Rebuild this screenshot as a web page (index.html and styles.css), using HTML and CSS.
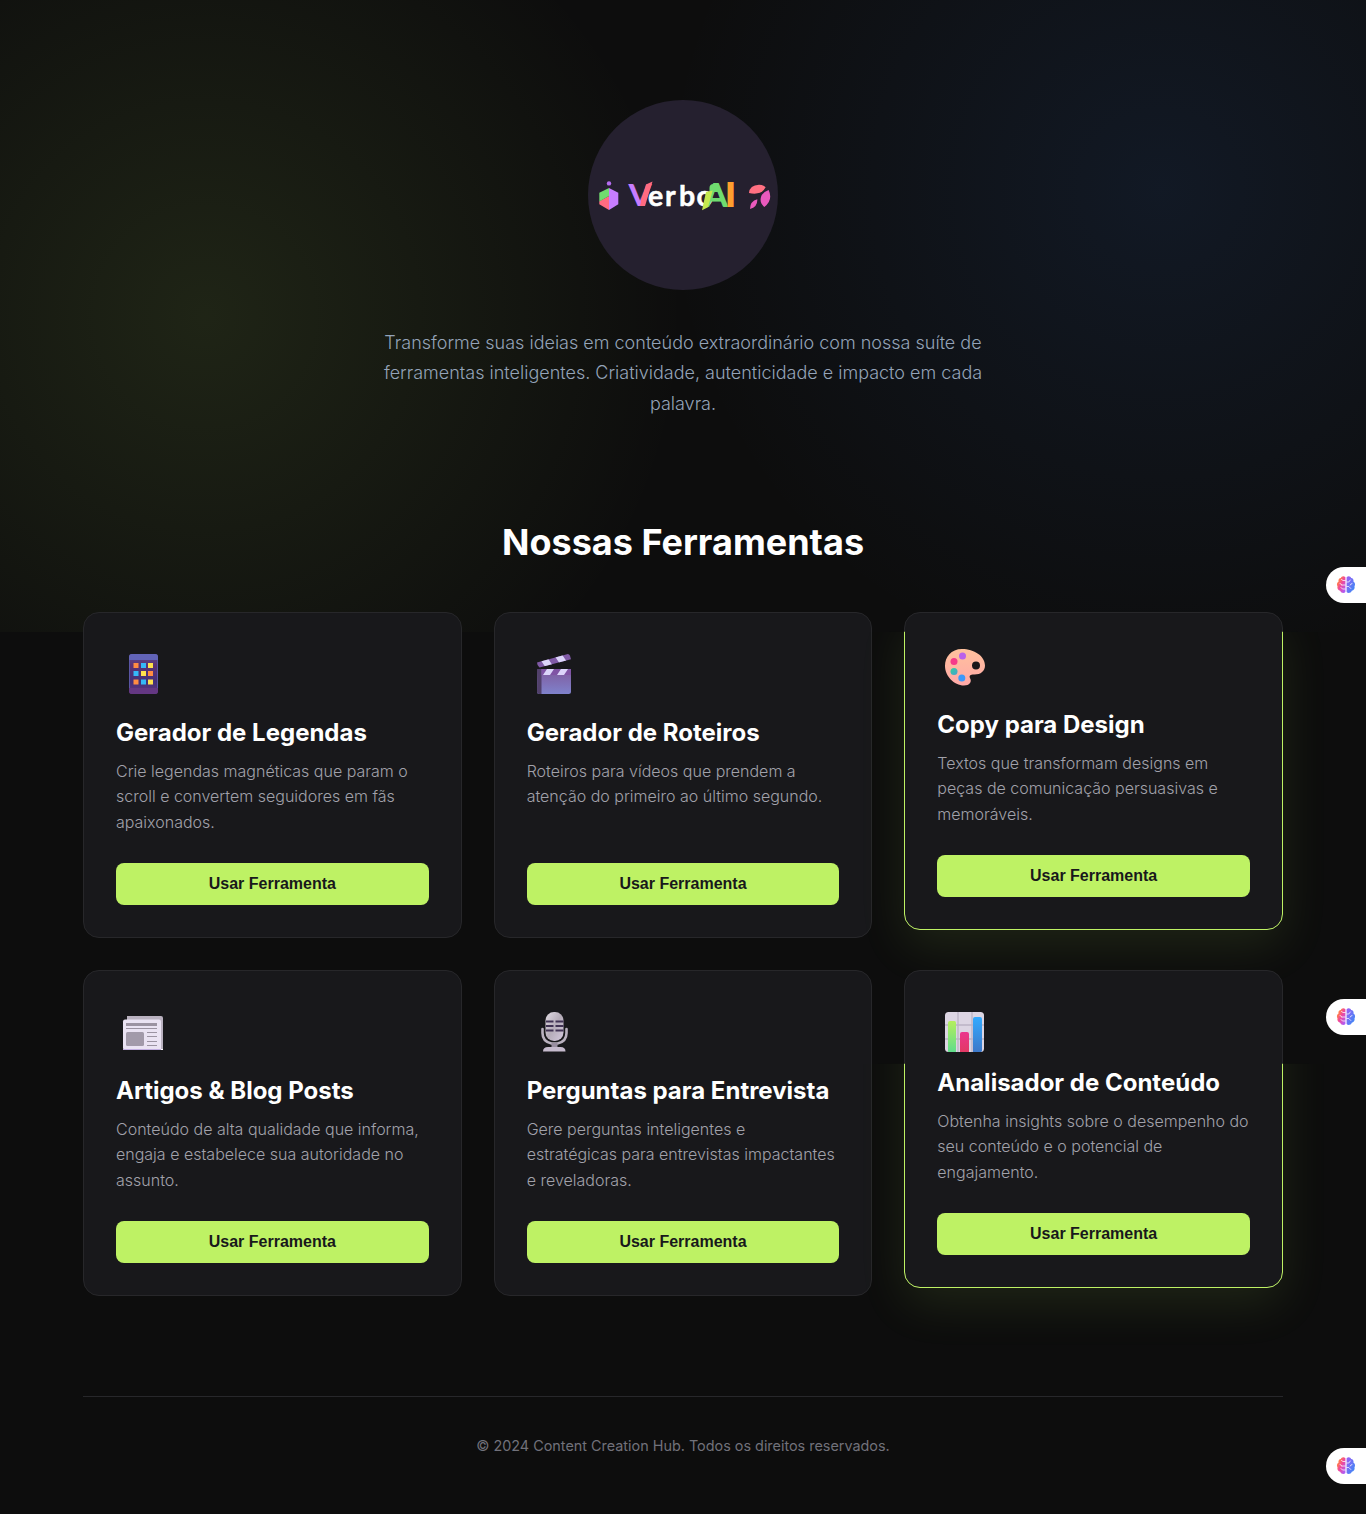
FILE: index.html
```html
<!DOCTYPE html>
<html lang="pt-BR">
<head>
<meta charset="utf-8">
<title>VerboAI</title>
<link rel="stylesheet" href="styles.css">
</head>
<body>
<svg width="0" height="0" class="defs" aria-hidden="true">
  <defs>
    <linearGradient id="brainFill" x1="0" y1="0" x2="1" y2="1"><stop offset="0" stop-color="#ff8a3c"/><stop offset=".25" stop-color="#ff7a50"/><stop offset=".5" stop-color="#f0489c"/><stop offset=".9" stop-color="#b05cf5"/></linearGradient>
    <linearGradient id="brainRight" x1="0" y1="0" x2="1" y2="1"><stop offset="0" stop-color="#a05cf5"/><stop offset="1" stop-color="#2f8ff5"/></linearGradient>
    <symbol id="brain" viewBox="0 0 20 20">
      <path fill="url(#brainFill)" d="M9.400 2.200C7.600.6 5.300 1.400 4.900 3.100 3 3.200 2 5 2.600 6.500.8 7.500.5 10 1.500 11.200.9 13.500 2.300 15.500 4.200 15.700c.8 2.300 3.800 3 5.200 1.300z"/>
      <path fill="url(#brainRight)" d="M10.600 2.200c1.800-1.600 4.100-.8 4.500.9 1.900.1 2.900 1.900 2.300 3.400 1.800 1 2.100 3.500 1.100 4.700.6 2.300-.8 4.300-2.700 4.500-.8 2.300-3.800 3-5.200 1.300z"/>
      <path fill="none" stroke="#fff" stroke-width=".75" stroke-linecap="round" d="M9.200 5.500H7L5.500 4.500M4 8.500q1.500.2 1.800 1.500M9.200 10H5.800M9.200 14H6.500L5 12.500M10.800 7h2l1.500-2M16 8.500q-1.500.2-1.800 1.500M10.800 11.500h2l2 2"/>
    </symbol>
  </defs>
</svg>

<div class="glow"></div>
<div class="page">
  <header class="hero">
    <svg class="logo" viewBox="0 0 190 190" role="img">
      <defs>
        <linearGradient id="vFill" x1="0" x2="1" y1="0" y2="0"><stop offset=".52" stop-color="#c77dff"/><stop offset=".56" stop-color="#ff6b81"/></linearGradient>
      </defs>
      <circle cx="95" cy="95" r="95" fill="#25202f"/>
      <circle cx="21" cy="83.400" r="2.200" fill="#b56cf0"/>
      <path fill="#c77dff" d="M21 88l9.300 4.700v11.600L21 110z"/>
      <path fill="#ff6b81" d="M21 96v14l-9.700-5.700v-3z"/>
      <path fill="#6fdc6f" d="M21 88v8l-9.700 5.500v-8.800z"/>
      <text class="wordmark heavy" x="40.500" y="106" font-size="30.500" textLength="23" lengthAdjust="spacingAndGlyphs" fill="url(#vFill)">V</text>
      <path fill="#ff6b81" d="M58 84.500l6.500-3-7.500 24.500h-5z"/>
      <text class="wordmark bold" x="60 77 91 108.500" y="106" font-size="28.500" fill="#fff">erbo</text>
      <text class="wordmark heavy" x="116" y="107" font-size="33" textLength="24" lengthAdjust="spacingAndGlyphs" fill="#6fdc6f">A</text>
      <path fill="#6fdc6f" d="M121.500 88q0-4 4-4h4l3 8h-11z"/>
      <path fill="#c5e84e" d="M118 92l6.700-1.400-4.700 16.700-6 3z"/>
      <text class="wordmark heavy" x="136.500" y="107.300" font-size="33.500" textLength="12" lengthAdjust="spacingAndGlyphs" fill="#ff9f2e">I</text>
      <g transform="translate(-8 -5) scale(.3333)">
        <path fill="#ff7082" d="M507 294Q509 270 537 269 550 269 557 277 544 302 507 294z"/>
        <path fill="#ea59bd" d="M566 285Q580 315 553 336 538 324 543 306 548 291 566 285zM532 313Q533 336 510 342 510 319 532 313z"/>
      </g>
    </svg>
    <p class="lead">Transforme suas ideias em conteúdo extraordinário com nossa suíte de ferramentas inteligentes. Criatividade, autenticidade e impacto em cada palavra.</p>
  </header>

  <main>
    <h2 class="section-title">Nossas Ferramentas</h2>
    <div class="grid">
      <article class="card">
        <svg class="icon" viewBox="0 0 56 56">
          <defs><linearGradient id="phone" x1="0" x2="0" y1="0" y2="1"><stop stop-color="#584c91"/><stop offset=".28" stop-color="#5c3273"/><stop offset=".7" stop-color="#423079"/><stop offset="1" stop-color="#66347e"/></linearGradient></defs>
          <rect x="13" y="9" width="29" height="40" rx="3" fill="url(#phone)"/>
          <path d="M16 9h23a3 3 0 0 1 3 3v3H13v-3a3 3 0 0 1 3-3z" fill="#6264b8"/>
          <path d="M13 43h29v3a3 3 0 0 1-3 3H16a3 3 0 0 1-3-3z" fill="#643783"/>
          <path d="M13.500 15v28M41.500 15v28" stroke="#5a55a4"/>
          <path fill="#ff8c42" d="M17.500 18h5v5h-5zM32 26h5v5h-5zM17.500 34.500h5v5h-5z"/>
          <path fill="#35b8f8" d="M25 18h5v5h-5zM17.500 26h5v5h-5zM25 34.500h5v5h-5z"/>
          <path fill="#ffe14d" d="M32 18h5v5h-5zM25 26h5v5h-5zM32 34.500h5v5h-5z"/>
        </svg>
        <h3>Gerador de Legendas</h3>
        <p>Crie legendas magnéticas que param o scroll e convertem seguidores em fãs apaixonados.</p>
        <button>Usar Ferramenta</button>
      </article>

      <article class="card">
        <svg class="icon" viewBox="0 0 56 56">
          <defs>
            <linearGradient id="clap" x1="0" x2="0" y1="0" y2="1"><stop stop-color="#805a9c"/><stop offset="1" stop-color="#7f82cc"/></linearGradient>
            <clipPath id="clapArm"><path d="M10 17.500L40 9.200q2-.5 3 1.500l1 3.500L12.500 22.500q-2.500-2-2.500-5z"/></clipPath>
          </defs>
          <g clip-path="url(#clapArm)"><rect x="8" y="6" width="38" height="18" fill="#805aa6"/><path fill="#dcd5fa" d="M13 14l7-2 6 9-7 2zM27 10l7-2 6 9-7 2z"/></g>
          <path d="M10.500 24H44v22.500a2.500 2.500 0 0 1-2.500 2.500h-29a2.500 2.500 0 0 1-2.500-2.500z" fill="url(#clap)"/>
          <path d="M10.500 24h4v25h-2a2.500 2.500 0 0 1-2.500-2.500z" fill="#51406b"/>
          <path d="M14.500 24H44v6H14.500z" fill="#8054a5"/>
          <path fill="#dcd5fa" d="M20 24h7l-4 6h-7zM34 24h7l-4 6h-7z"/>
        </svg>
        <h3>Gerador de Roteiros</h3>
        <p>Roteiros para vídeos que prendem a atenção do primeiro ao último segundo.</p>
        <button>Usar Ferramenta</button>
      </article>

      <article class="card active">
        <svg class="icon" viewBox="0 0 56 56">
          <defs>
            <linearGradient id="pal" x1="0" x2="0" y1="0" y2="1"><stop stop-color="#ffc19d"/><stop offset="1" stop-color="#ffa9a8"/></linearGradient>
            <linearGradient id="teal" x1="0" x2="1" y1="0" y2="1"><stop stop-color="#30d09a"/><stop offset="1" stop-color="#4a9fd0"/></linearGradient>
          </defs>
          <path fill="url(#pal)" fill-rule="evenodd" d="M25 12C14 12 8 20 8 29c0 10 9 19.500 19 19.500 5.500 0 8-3.500 6.200-7-1.500-3 0-4 3.800-4 6.500.2 11-3.200 11-9C48 19 37 12 25 12zm14 12.500a4 4 0 1 1 0 8 4 4 0 0 1 0-8z"/>
          <circle cx="25.500" cy="19" r="3.500" fill="#ba61eb"/><circle cx="17" cy="24.500" r="3.500" fill="#f53a8a"/><circle cx="17" cy="34.500" r="3.500" fill="url(#teal)"/><circle cx="24.800" cy="41" r="3.500" fill="#3c98fb"/>
        </svg>
        <h3>Copy para Design</h3>
        <p>Textos que transformam designs em peças de comunicação persuasivas e memoráveis.</p>
        <button>Usar Ferramenta</button>
      </article>

      <article class="card">
        <svg class="icon" viewBox="0 -5 56 56">
          <path d="M11 8h34q2 0 2 2v31H11z" fill="#b9b1c0"/>
          <path d="M9 11.500h34q2 0 2 2V42H9a2 2 0 0 1-2-2V13.500a2 2 0 0 1 2-2z" fill="#eae3f3"/>
          <path d="M7 41h38v1H7z" fill="#c1aee0"/>
          <path d="M45 41h2v1h-2z" fill="#fff"/>
          <path d="M10 15h31v3H10zM10 20h31v1H10zM31 24h10v1H31zM31 28h10v1H31zM31 33h10v1H31zM31 37h10v1H31z" fill="#9b93a2"/>
          <rect x="10" y="24" width="18" height="14" rx="1.500" fill="#a29aaa"/>
        </svg>
        <h3>Artigos &amp; Blog Posts</h3>
        <p>Conteúdo de alta qualidade que informa, engaja e estabelece sua autoridade no assunto.</p>
        <button>Usar Ferramenta</button>
      </article>

      <article class="card">
        <svg class="icon" viewBox="0 -1 56 56">
          <defs><linearGradient id="mic" x1="0" x2="1" y1="0" y2="1"><stop stop-color="#e2dde5"/><stop offset=".5" stop-color="#b5acb9"/><stop offset="1" stop-color="#d5c9df"/></linearGradient></defs>
          <path d="M15.500 25v4c0 6 4 9.500 9 10.500h6c5-1 9-4.500 9-10.500v-4" fill="none" stroke="#b9b1bf" stroke-width="2.600" stroke-linecap="round"/>
          <path d="M24.500 39h6v4.500h-6z" fill="#988ea0"/>
          <path d="M16 47.500q0-4.500 5-4.500h12.500q5 0 5 4.500z" fill="#c5bacd"/>
          <rect x="18.500" y="8" width="18" height="29" rx="8.500" fill="url(#mic)"/>
          <path d="M19 17.500h7.500M28.500 17.500h8M19 22h7.500M28.500 22h8M19 26.500h7.500M28.500 26.500h8" stroke="#413354" stroke-width="1.800"/>
        </svg>
        <h3>Perguntas para Entrevista</h3>
        <p>Gere perguntas inteligentes e estratégicas para entrevistas impactantes e reveladoras.</p>
        <button>Usar Ferramenta</button>
      </article>

      <article class="card active late">
        <svg class="icon" viewBox="0 0 56 56">
          <defs>
            <linearGradient id="barA" x1="0" x2="0" y1="0" y2="1"><stop stop-color="#b5ee5d"/><stop offset="1" stop-color="#60dd8c"/></linearGradient>
            <linearGradient id="barB" x1="0" x2="0" y1="0" y2="1"><stop stop-color="#eb368e"/><stop offset="1" stop-color="#e23a64"/></linearGradient>
            <linearGradient id="barC" x1="0" x2="0" y1="0" y2="1"><stop stop-color="#32aaff"/><stop offset="1" stop-color="#3d78c9"/></linearGradient>
          </defs>
          <rect x="8" y="9" width="39" height="40" rx="3.500" fill="#dcd5e3"/>
          <path d="M21 9v40M35 9v40M8 22h39M8 36h39" stroke="#bbb3c5" stroke-width="1.300"/>
          <path d="M11 20q0-2 2-2h4.500q1.500 0 1.500 2v29h-7.500l-.5-.6z" fill="url(#barA)"/>
          <path d="M23 31q0-2 2-2h5q2 0 2 2v18h-9z" fill="url(#barB)"/>
          <path d="M36 16q0-2 2-2h5q2 0 2 2v32l-1 1h-8z" fill="url(#barC)"/>
        </svg>
        <h3>Analisador de Conteúdo</h3>
        <p>Obtenha insights sobre o desempenho do seu conteúdo e o potencial de engajamento.</p>
        <button>Usar Ferramenta</button>
      </article>
    </div>
  </main>

  <footer>© 2024 Content Creation Hub. Todos os direitos reservados.</footer>
</div>

<div class="tab tab-top"><svg viewBox="0 0 20 20"><use href="#brain"/></svg></div>
<div class="tab tab-middle"><svg viewBox="0 0 20 20"><use href="#brain"/></svg></div>
<div class="tab tab-bottom"><svg viewBox="0 0 20 20"><use href="#brain"/></svg></div>
</body>
</html>
```
FILE: styles.css
```css
* { box-sizing: border-box; margin: 0; }

body {
  position: relative;
  min-height: 1514px;
  overflow-x: hidden;
  background: #0d0d0d;
  color: #fff;
  font-family: Inter, "Liberation Sans", sans-serif;
  line-height: 1.6;
}

.defs { position: absolute; }

.glow {
  position: absolute;
  inset: 0 0 auto;
  height: 632px;
  background:
    radial-gradient(circle at 15% 50%, rgba(190, 242, 100, 0.1), transparent 40%),
    radial-gradient(circle at 85% 30%, rgba(59, 130, 246, 0.1), transparent 40%);
}

.page { position: relative; width: 1200px; margin: 0 auto; }

.hero {
  display: flex;
  flex-direction: column;
  align-items: center;
  gap: 37.6px;
  padding-top: 100px;
}
.logo { display: block; width: 190px; height: 190px; }
.wordmark { font-family: Lato, sans-serif; font-weight: 700; }
.bold { stroke: #fff; stroke-width: 0.5px; }
.heavy { font-weight: 900; }

.lead {
  width: 600px;
  text-align: center;
  font-size: 18px;
  font-weight: 300;
  line-height: 30.6px;
  color: #94a3b8;
}

.section-title {
  margin: 93.4px 0 41px;
  text-align: center;
  font-size: 36px;
  font-weight: 700;
  line-height: 58px;
}

.grid { display: grid; grid-template-columns: repeat(3, 1fr); grid-auto-rows: 326px; gap: 32px; }

.card {
  position: relative;
  display: flex;
  flex-direction: column;
  padding: 32px;
  border: 1px solid #27272a;
  border-radius: 16px;
  background: #18181b;
}
.icon { display: block; width: 56px; height: 56px; margin-bottom: 13px; flex: none; }
.card h3 { margin-bottom: 7px; font-size: 24px; font-weight: 700; line-height: 38px; white-space: nowrap; }
.card p { font-size: 16px; font-weight: 300; line-height: 25.6px; color: #a1a1aa; }
.card button {
  height: 42px;
  margin-top: auto;
  border: 0;
  border-radius: 8px;
  background: #bef264;
  color: #18181b;
  font: 700 16px "Liberation Sans", Arial, sans-serif;
}

.active { margin-bottom: 8px; padding-top: 24px; }
.active::after {
  content: "";
  position: absolute;
  inset: -1px;
  border: 1px solid #bef264;
  border-radius: 16px;
  box-shadow: 0 16px 48px rgba(190, 242, 100, 0.1);
  clip-path: inset(20px -80px -80px);
  pointer-events: none;
}
.late { padding-top: 32px; }
.late .icon { margin-bottom: 5px; }
.late::after { clip-path: inset(94px -80px -80px); }

footer {
  margin-top: 100px;
  padding-top: 37px;
  border-top: 1px solid #27272a;
  text-align: center;
  font-size: 14.4px;
  color: #71717a;
}

.tab {
  position: absolute;
  right: 0;
  display: flex;
  align-items: center;
  width: 40px;
  height: 36px;
  padding-left: 10px;
  border-radius: 18px 0 0 18px;
  background: #fff;
}
.tab svg { width: 20px; height: 20px; }
.tab-top { top: 567px; }
.tab-middle { top: 999px; }
.tab-bottom { top: 1448px; }
```
